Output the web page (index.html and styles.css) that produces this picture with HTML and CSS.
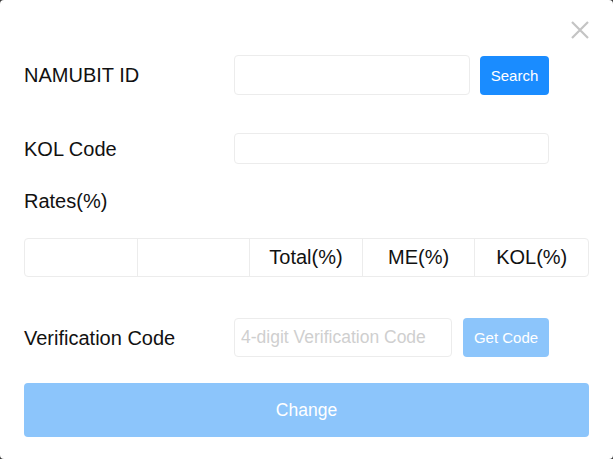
FILE: index.html
```html
<!DOCTYPE html>
<html>
<head>
<meta charset="utf-8">
<link rel="stylesheet" href="styles.css">
</head>
<body>
<div class="modal">
  <button class="close" aria-label="close">
    <svg width="20" height="20" viewBox="0 0 20 20"><path d="M2 2 L18 18 M18 2 L2 18" stroke="#c4c4c4" stroke-width="2.2" fill="none"/></svg>
  </button>
  <div class="row row-id">
    <div class="label">NAMUBIT ID</div>
    <input class="field field-id" type="text">
    <button class="btn btn-search">Search</button>
  </div>
  <div class="row row-kol">
    <div class="label">KOL Code</div>
    <input class="field field-kol" type="text">
  </div>
  <div class="rates">Rates(%)</div>
  <div class="table">
    <div class="cell"></div>
    <div class="cell"></div>
    <div class="cell">Total(%)</div>
    <div class="cell">ME(%)</div>
    <div class="cell">KOL(%)</div>
  </div>
  <div class="row row-code">
    <div class="label">Verification Code</div>
    <input class="field field-code" type="text" placeholder="4-digit Verification Code">
    <button class="btn btn-get">Get Code</button>
  </div>
  <button class="btn-change">Change</button>
</div>
</body>
</html>
```

FILE: styles.css
```css
html, body {
  margin: 0;
  padding: 0;
  background: #3a3a3a;
}
body {
  font-family: "Liberation Sans", Arial, sans-serif;
  color: #111;
}
.modal {
  position: relative;
  width: 613px;
  height: 459px;
  box-sizing: border-box;
  background: #fff;
  border-radius: 4px;
  padding: 55px 24px 0 24px;
  display: flex;
  flex-direction: column;
}
.close {
  position: absolute;
  top: 20px;
  right: 23px;
  width: 20px;
  height: 20px;
  padding: 0;
  border: 0;
  background: none;
}
.close svg { display: block; }
.row {
  display: flex;
  align-items: center;
}
.label {
  width: 210px;
  flex: none;
  font-size: 20px;
  line-height: 24px;
}
.field {
  box-sizing: border-box;
  border: 1px solid #ececec;
  border-radius: 4px;
  background: #fff;
  padding: 0 6px;
  font-family: "Liberation Sans", Arial, sans-serif;
  font-size: 17.5px;
  outline: none;
}
.field::placeholder { color: #cfcfcf; }
.row-id { height: 40px; }
.field-id { width: 236px; height: 40px; }
.btn {
  border: 0;
  border-radius: 4px;
  color: #fff;
  font-family: "Liberation Sans", Arial, sans-serif;
  font-size: 15px;
  padding: 0;
}
.btn-search {
  margin-left: 10px;
  width: 69px;
  height: 39px;
  background: #1a8cff;
}
.row-kol { margin-top: 38px; height: 31px; }
.field-kol { width: 315px; height: 31px; }
.rates {
  margin-top: 25px;
  font-size: 20px;
  line-height: 24px;
}
.table {
  margin-top: 25px;
  height: 39px;
  box-sizing: border-box;
  border: 1px solid #ececec;
  border-radius: 4px;
  display: grid;
  grid-template-columns: repeat(5, 1fr);
}
.cell {
  display: flex;
  align-items: center;
  justify-content: center;
  font-size: 20px;
  border-right: 1px solid #ececec;
}
.cell:last-child { border-right: 0; }
.row-code { margin-top: 41px; height: 39px; }
.field-code { width: 218px; height: 39px; }
.btn-get {
  margin-left: 11px;
  width: 86px;
  height: 39px;
  background: #8cc5fb;
}
.btn-change {
  margin-top: 26px;
  height: 54px;
  border: 0;
  border-radius: 4px;
  background: #8cc5fb;
  color: #fff;
  font-family: "Liberation Sans", Arial, sans-serif;
  font-size: 17.5px;
}
```
